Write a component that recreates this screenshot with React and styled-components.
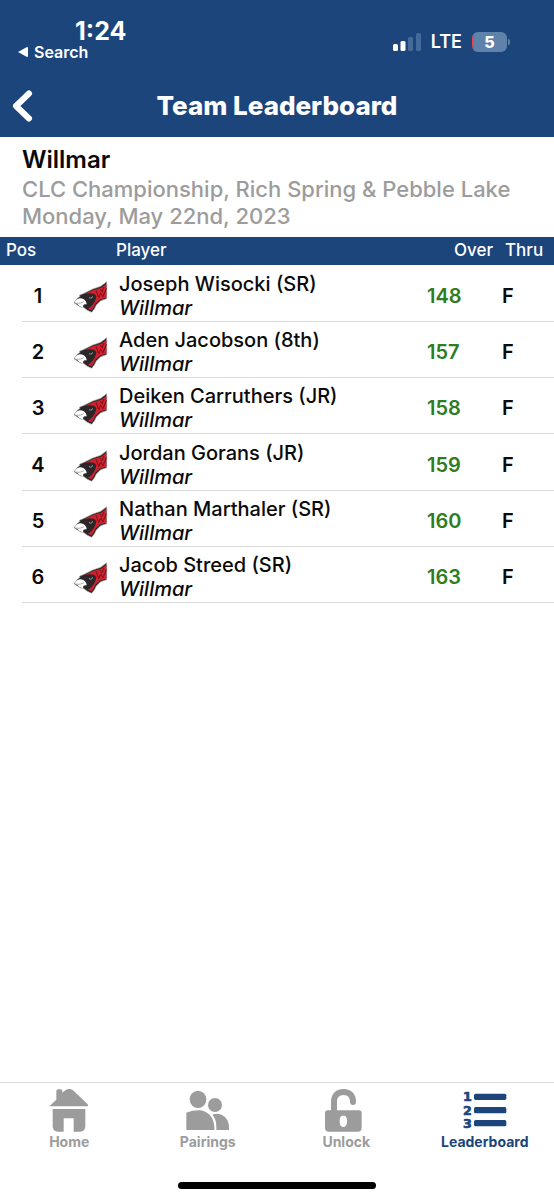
import React from "react";
import styled, { createGlobalStyle } from "styled-components";

const NAVY = "#1c457c";
const GREY = "#9c9c9c";

const GlobalStyle = createGlobalStyle`
  * { box-sizing: border-box; }
  body {
    margin: 0;
    background: #fff;
    color: #0a0a0a;
    font-family: Inter, "Liberation Sans", sans-serif;
  }
  button { font: inherit; color: inherit; background: none; border: 0; padding: 0; cursor: pointer; }
  a { color: inherit; text-decoration: none; }
  h1, h2, p { margin: 0; }
  svg { display: block; }
`;

const Screen = styled.div`
  min-height: 100vh;
  display: flex;
  flex-direction: column;
`;

const Header = styled.header`
  background: ${NAVY};
  color: #fff;
`;

const StatusBar = styled.div`
  display: flex;
  justify-content: space-between;
  align-items: flex-start;
  height: 74px;
  padding: 18px 44px 0 18px;
`;

const ClockGroup = styled.div`
  display: flex;
  flex-direction: column;
`;

const Clock = styled.time`
  padding-left: 57px;
  font-size: 25px;
  line-height: 26px;
  font-weight: 700;
`;

const BackToSearch = styled.a`
  display: flex;
  align-items: center;
  gap: 6px;
  font-size: 16px;
  line-height: 16px;
  font-weight: 600;
`;

const StatusIcons = styled.div`
  display: flex;
  align-items: center;
  gap: 10px;
  padding-top: 13px;
  height: 34px;
`;

const Network = styled.span`
  font-size: 18px;
  line-height: 22px;
  font-weight: 600;
`;

const Battery = styled.div`
  display: flex;
  align-items: center;
  gap: 1px;
`;

const BatteryBody = styled.div`
  width: 35px;
  height: 20px;
  border-radius: 6px;
  background: linear-gradient(to right, #e0474f 2px, #5e82a9 2px);
  font-size: 16px;
  line-height: 20px;
  font-weight: 800;
  text-align: center;
`;

const BatteryCap = styled.div`
  width: 2px;
  height: 6px;
  border-radius: 0 2px 2px 0;
  background: #5e82a9;
`;

const TitleBar = styled.div`
  display: grid;
  grid-template-columns: 48px 1fr 48px;
  align-items: center;
  height: 63px;
`;

const BackButton = styled.button`
  width: 48px;
  height: 48px;
  padding-left: 12px;
`;

const Title = styled.h1`
  font-size: 26px;
  line-height: 30px;
  font-weight: 800;
  text-align: center;
`;

const Main = styled.main`
  flex: 1;
`;

const EventInfo = styled.section`
  height: 100px;
  padding: 8px 22px 0;
`;

const TeamName = styled.h2`
  margin-bottom: 1px;
  font-size: 24px;
  line-height: 30px;
  font-weight: 600;
`;

const EventLine = styled.p`
  font-size: 22px;
  line-height: 27px;
  font-weight: 500;
  color: ${GREY};
`;

const Board = styled.table`
  width: 100%;
  border-collapse: collapse;
  table-layout: fixed;
`;

const PosCol = styled.col`
  width: 74px;
`;
const OverCol = styled.col`
  width: 106px;
`;
const ThruCol = styled.col`
  width: 61px;
`;

const HeadCell = styled.th`
  height: 28px;
  padding: 0 0 2px ${(p) => p.$inset}px;
  background: ${NAVY};
  color: #fff;
  font-size: 17px;
  line-height: 20px;
  font-weight: 500;
  text-align: left;
`;

const Row = styled.tr`
  height: 56px;
  background: linear-gradient(#dcdcdc, #dcdcdc) right bottom / calc(100% - 22px) 1px no-repeat;
  &:nth-child(3n + 1) { height: 57px; }
`;

const Cell = styled.td`
  padding: 4px 0 0;
  font-size: 20px;
  line-height: 24px;
  font-weight: 600;
`;

const PosCell = styled(Cell)`
  text-align: center;
  padding-left: 2px;
`;

const PlayerCell = styled(Cell)`
  font-weight: 500;
`;

const ScoreCell = styled(Cell)`
  padding-left: 40px;
  color: #2e7d1e;
`;

const ThruCell = styled(Cell)`
  padding-left: 9px;
`;

const PlayerBox = styled.div`
  display: flex;
  align-items: center;
  gap: 11px;
  white-space: nowrap;
`;

const TeamLabel = styled.div`
  font-style: italic;
`;

const TabBar = styled.nav`
  border-top: 1px solid #dcdcdc;
  height: 118px;
  display: flex;
  flex-direction: column;
  align-items: center;
  justify-content: space-between;
  padding-bottom: 11px;
`;

const Tabs = styled.div`
  width: 100%;
  display: grid;
  grid-template-columns: repeat(4, 1fr);
`;

const Tab = styled.a`
  display: flex;
  flex-direction: column;
  align-items: center;
  padding-top: 5px;
  font-size: 14px;
  line-height: 18px;
  font-weight: 700;
  color: ${(p) => (p.$active ? NAVY : GREY)};
`;

const HomeIndicator = styled.div`
  width: 198px;
  height: 7px;
  border-radius: 4px;
  background: #000;
`;

const CardinalLogo = () => (
  <svg width="34" height="34" viewBox="6 1 102 102" role="img" aria-label="Willmar Cardinals">
    <path d="M6 72L16 59L24 53L22 50L38 43L62 31L86 23L104 9V60L86 66L73 79L67 91L59 101L46 95L34 86L25 85L15 78Z" fill="#2b2729" stroke="#b5b0b0" strokeWidth="2" />
    <path d="M38 46L64 34L88 27L103 15V57L85 62L71 74L64 87L58 95L48 90C60 83 68 73 71 61L73 52L66 45L52 44Z" fill="#d3202c" />
    <path d="M72 35L80 57L86 43L93 54L103 29M84 31L90 39L96 25" fill="none" stroke="#75151d" strokeWidth="3" />
    <path d="M8 71C14 60 24 56 34 61C40 64 44 71 44 77C36 75 33 78 33 86C24 85 19 80 17 76Q12 74 8 71Z" fill="#fff" />
    <path d="M14 73C22 75 28 73 36 69" fill="none" stroke="#8b8888" strokeWidth="2" />
    <path d="M50 56C55 57 60 55 63 51C61 60 55 63 50 56Z" fill="#c3c9cc" />
    <circle cx="57" cy="57" r="2" fill="#222" />
  </svg>
);

const SignalIcon = () => (
  <svg width="28" height="18" viewBox="0 0 28 18" aria-label="Signal: 2 of 4 bars" role="img">
    <rect x="0" y="11" width="5" height="7" rx="1.5" fill="#fff" />
    <rect x="7.5" y="8" width="5" height="10" rx="1.5" fill="#fff" />
    <rect x="15" y="4" width="5" height="14" rx="1.5" fill="#456a99" />
    <rect x="23" y="0" width="5" height="18" rx="1.5" fill="#456a99" />
  </svg>
);

const HomeIcon = () => (
  <svg width="42" height="45" viewBox="0 0 126 135" fill="currentColor" aria-hidden="true">
    <path d="M5 54L25 35V9Q25 4 30 4H38Q43 4 43 9V14L53 6Q64 0 75 7L119 49Q123 55 116 55H8Q3 55 5 54Z" />
    <path d="M14 63H112V114Q112 131 96 131H77V91H47V131H30Q14 131 14 114Z" />
  </svg>
);

const PairingsIcon = () => (
  <svg width="44" height="45" viewBox="2 0 132 135" fill="currentColor" aria-hidden="true">
    <ellipse cx="38" cy="34" rx="25" ry="26" />
    <circle cx="89" cy="51" r="21" />
    <path d="M3 74Q22 66 46 67C70 71 86 90 87 118V126H3Z" />
    <path d="M81 80Q87 77 97 77C118 80 131 96 131 117V126H93V116Q93 93 81 80Z" />
  </svg>
);

const UnlockIcon = () => (
  <svg width="42" height="45" viewBox="6 0 126 135" aria-hidden="true">
    <path d="M33 72V41C33 21 45 12 62 12C80 12 90 23 90 42" fill="none" stroke="currentColor" strokeWidth="18" strokeLinecap="round" />
    <path fill="currentColor" fillRule="evenodd" d="M14 67H108Q116 67 116 75V119Q116 131 104 131H18Q6 131 6 119V75Q6 67 14 67ZM61 83C52 83 50 89 50 99C50 110 53 117 61 117C69 117 72 110 72 99C72 89 70 83 61 83Z" />
  </svg>
);

const LeaderboardIcon = () => (
  <svg width="44" height="45" viewBox="0 0 132 135" fill="currentColor" aria-hidden="true">
    <g fontFamily="'DejaVu Sans', sans-serif" fontSize="38" fontWeight="700" stroke="currentColor" strokeWidth="2">
      <text x="0" y="40">1</text>
      <text x="0" y="80">2</text>
      <text x="0" y="120">3</text>
    </g>
    <rect x="33" y="17" width="97" height="19" rx="5" />
    <rect x="33" y="57" width="97" height="19" rx="5" />
    <rect x="33" y="96" width="97" height="19" rx="5" />
  </svg>
);

const players = [
  ["Joseph Wisocki (SR)", 148],
  ["Aden Jacobson (8th)", 157],
  ["Deiken Carruthers (JR)", 158],
  ["Jordan Gorans (JR)", 159],
  ["Nathan Marthaler (SR)", 160],
  ["Jacob Streed (SR)", 163],
];

const tabs = [
  ["Home", HomeIcon],
  ["Pairings", PairingsIcon],
  ["Unlock", UnlockIcon],
  ["Leaderboard", LeaderboardIcon],
];

export default function App() {
  return (
    <Screen>
      <GlobalStyle />
      <Header>
        <StatusBar>
          <ClockGroup>
            <Clock>1:24</Clock>
            <BackToSearch href="#search">
              <svg width="10" height="10" viewBox="0 0 10 10" fill="#fff" aria-hidden="true">
                <path d="M0 5L9 0Q10 0 10 1V9Q10 10 9 10Z" />
              </svg>
              Search
            </BackToSearch>
          </ClockGroup>
          <StatusIcons>
            <SignalIcon />
            <Network>LTE</Network>
            <Battery>
              <BatteryBody>5</BatteryBody>
              <BatteryCap />
            </Battery>
          </StatusIcons>
        </StatusBar>
        <TitleBar>
          <BackButton aria-label="Back">
            <svg width="21" height="32" viewBox="0 0 21 32" fill="none" stroke="#fff" strokeWidth="6" strokeLinecap="round" strokeLinejoin="round" aria-hidden="true">
              <path d="M17 3.5L4 16L17 28.5" />
            </svg>
          </BackButton>
          <Title>Team Leaderboard</Title>
        </TitleBar>
      </Header>
      <Main>
        <EventInfo>
          <TeamName>Willmar</TeamName>
          <EventLine>CLC Championship, Rich Spring &amp; Pebble Lake</EventLine>
          <EventLine>Monday, May 22nd, 2023</EventLine>
        </EventInfo>
        <Board>
          <colgroup>
            <PosCol />
            <col />
            <OverCol />
            <ThruCol />
          </colgroup>
          <thead>
            <tr>
              <HeadCell $inset={6}>Pos</HeadCell>
              <HeadCell $inset={42}>Player</HeadCell>
              <HeadCell $inset={67}>Over</HeadCell>
              <HeadCell $inset={12}>Thru</HeadCell>
            </tr>
          </thead>
          <tbody>
            {players.map(([name, score], i) => (
              <Row key={name}>
                <PosCell>{i + 1}</PosCell>
                <PlayerCell>
                  <PlayerBox>
                    <CardinalLogo />
                    <div>
                      <div>{name}</div>
                      <TeamLabel>Willmar</TeamLabel>
                    </div>
                  </PlayerBox>
                </PlayerCell>
                <ScoreCell>{score}</ScoreCell>
                <ThruCell>F</ThruCell>
              </Row>
            ))}
          </tbody>
        </Board>
      </Main>
      <TabBar aria-label="Main">
        <Tabs>
          {tabs.map(([label, Icon]) => (
            <Tab key={label} href={"#" + label.toLowerCase()} $active={label === "Leaderboard"}>
              <Icon />
              {label}
            </Tab>
          ))}
        </Tabs>
        <HomeIndicator />
      </TabBar>
    </Screen>
  );
}
